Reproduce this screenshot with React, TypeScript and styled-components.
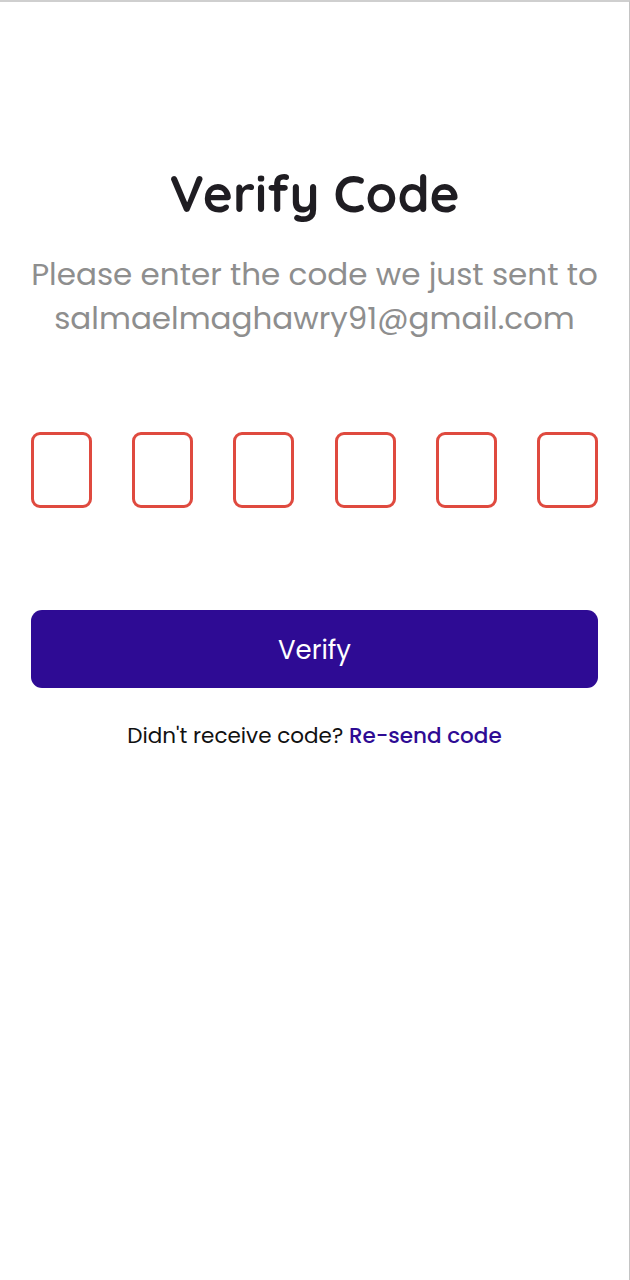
import React from "react";
import styled, { createGlobalStyle } from "styled-components";

const Global = createGlobalStyle`
  html, body { margin: 0; padding: 0; background: #ffffff; }
  * { box-sizing: border-box; }
`;

const Screen = styled.div`
  width: 630px;
  height: 1280px;
  border-top: 2px solid #cfcfcf;
  border-right: 1px solid #c4c4c4;
  background: #ffffff;
  display: flex;
  flex-direction: column;
  align-items: center;
  padding: 0 31px;
  font-family: "Poppins", "Lato", "Open Sans", sans-serif;
`;

const Title = styled.h1`
  margin: 156px 0 0;
  font-family: "Quicksand", "Lato", sans-serif;
  font-weight: 700;
  font-size: 51px;
  line-height: 70px;
  color: #1f1d22;
  text-align: center;
`;

const Subtitle = styled.p`
  margin: 24px 0 0;
  font-size: 31px;
  line-height: 44px;
  color: #8e8e8e;
  text-align: center;
  white-space: nowrap;
`;

const CodeRow = styled.div`
  margin-top: 92px;
  width: 100%;
  display: flex;
  justify-content: space-between;
`;

const CodeBox = styled.input`
  width: 61px;
  height: 76px;
  border: 3px solid #df4a3f;
  border-radius: 9px;
  background: #ffffff;
  outline: none;
  text-align: center;
  font-size: 28px;
  padding: 0;
`;

const Button = styled.button`
  margin-top: 102px;
  width: 100%;
  height: 78px;
  border: none;
  border-radius: 11px;
  background: #2e0b94;
  color: #ffffff;
  font-family: inherit;
  font-size: 26px;
  padding-top: 3px;
  cursor: pointer;
`;

const Footer = styled.p`
  margin: 33px 0 0;
  font-size: 21.5px;
  line-height: 30px;
  color: #111111;
`;

const Link = styled.a`
  color: #2e0b94;
  font-weight: 500;
  text-decoration: none;
`;

export default function App() {
  return (
    <>
      <Global />
      <Screen>
        <Title>Verify Code</Title>
        <Subtitle>
          Please enter the code we just sent to
          <br />
          salmaelmaghawry91@gmail.com
        </Subtitle>
        <CodeRow>
          {[0, 1, 2, 3, 4, 5].map((i) => (
            <CodeBox key={i} maxLength={1} aria-label={`digit ${i + 1}`} />
          ))}
        </CodeRow>
        <Button>Verify</Button>
        <Footer>
          Didn't receive code? <Link href="#">Re-send code</Link>
        </Footer>
      </Screen>
    </>
  );
}
